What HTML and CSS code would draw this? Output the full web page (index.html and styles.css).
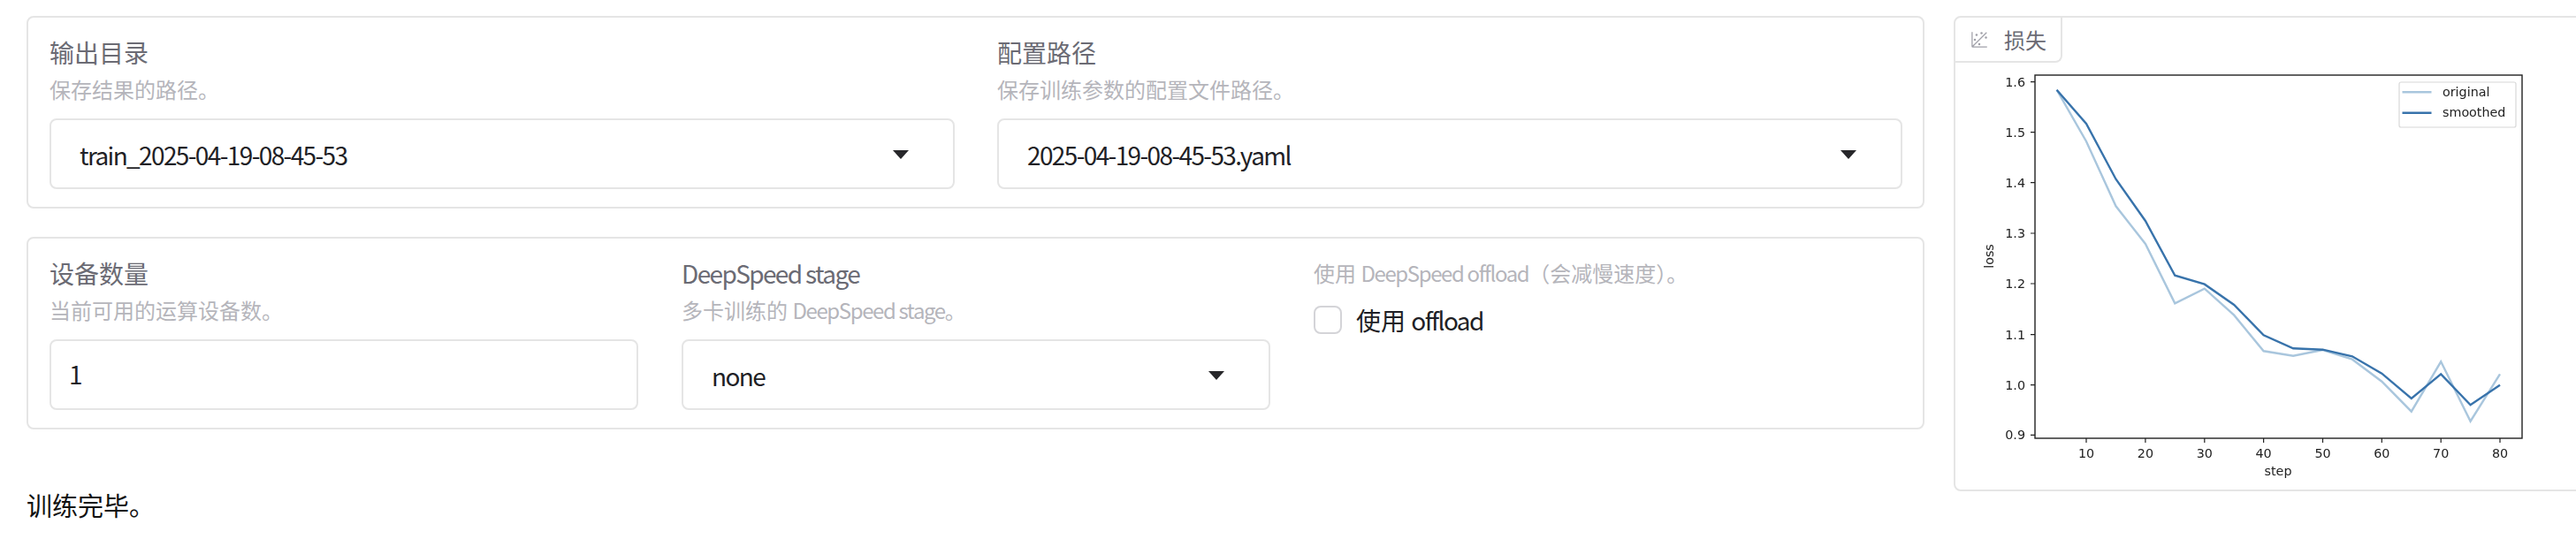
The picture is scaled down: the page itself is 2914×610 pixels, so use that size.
FILE: index.html
```html
<!DOCTYPE html>
<html lang="zh-CN">
<head>
    <meta charset="UTF-8">
    <title>训练</title>
    <link rel="stylesheet" href="styles.css">
</head>
<body>

    <div class="page">
        <div class="left-col">
            <div class="block two-col">
                <div class="field">
                    <div class="label">输出目录</div>
                    <div class="info">保存结果的路径。</div>
                    <div class="input select"><span class="en">train_2025-04-19-08-45-53</span><i class="caret"></i></div>
                </div>
                <div class="field">
                    <div class="label">配置路径</div>
                    <div class="info">保存训练参数的配置文件路径。</div>
                    <div class="input select"><span class="en">2025-04-19-08-45-53.yaml</span><i class="caret"></i></div>
                </div>
            </div>

            <div class="block three-col">
                <div class="field">
                    <div class="label">设备数量</div>
                    <div class="info">当前可用的运算设备数。</div>
                    <div class="input number"><span>1</span></div>
                </div>
                <div class="field">
                    <div class="label en">DeepSpeed stage</div>
                    <div class="info">多卡训练的 <span class="en">DeepSpeed stage</span>。</div>
                    <div class="input select"><span class="en">none</span><i class="caret"></i></div>
                </div>
                <div class="field">
                    <div class="info check-info">使用 <span class="en">DeepSpeed offload</span>（会减慢速度）。</div>
                    <div class="check-row">
                        <span class="checkbox"></span>
                        <span class="check-text">使用 <span class="en">offload</span></span>
                    </div>
                </div>
            </div>

            <div class="status">训练完毕。</div>
        </div>

        <div class="plot-card">
            <div class="plot-label">
                <svg class="plot-icon" viewBox="0 0 32 32" fill="currentColor">
                    <circle cx="20" cy="4" r="2"/>
                    <circle cx="8" cy="16" r="2"/>
                    <circle cx="28" cy="12" r="2"/>
                    <circle cx="11" cy="7" r="2"/>
                    <circle cx="16" cy="24" r="2"/>
                    <path d="M30 3.413L28.586 2L4 26.585V2H2v26a2 2 0 0 0 2 2h26v-2H5.413Z"/>
                </svg>
                <span>损失</span>
            </div>

            <!-- viewBox uses the page coordinates of the chart -->
            <svg class="chart" viewBox="2212 72 700 482" width="700" height="482">
                <rect x="2302" y="85" width="551" height="411" fill="#fff" stroke="#222" stroke-width="1.4"/>

                <g stroke="#222" stroke-width="1.2">
                    <path d="M2297 92.7h5M2297 149.7h5M2297 206.7h5M2297 264h5M2297 321h5M2297 378.7h5M2297 435.7h5M2297 492.3h5"/>
                    <path d="M2360 496v5M2426.9 496v5M2493.8 496v5M2560.6 496v5M2627.5 496v5M2694.3 496v5M2761.2 496v5M2828 496v5"/>
                </g>

                <polyline class="line-orig" points="2326.6,101.7 2360,160 2393.5,233.3 2426.9,276 2460.3,343.3 2493.8,326.7 2527.2,356.7 2560.6,397.3 2594.1,402.7 2627.5,396 2660.9,406.7 2694.3,431.7 2727.8,465.7 2761.2,409.3 2794.6,476.7 2828,423.3"/>
                <polyline class="line-smooth" points="2326.6,101.7 2360,140 2393.5,202.7 2426.9,250 2460.3,311.7 2493.8,321.7 2527.2,345 2560.6,379.3 2594.1,394.3 2627.5,395.7 2660.9,403.3 2694.3,422.7 2727.8,451 2761.2,423.3 2794.6,458.3 2828,435.7"/>

                <g class="tick-y">
                    <text x="2291" y="97.7">1.6</text>
                    <text x="2291" y="154.7">1.5</text>
                    <text x="2291" y="211.7">1.4</text>
                    <text x="2291" y="269">1.3</text>
                    <text x="2291" y="326">1.2</text>
                    <text x="2291" y="383.7">1.1</text>
                    <text x="2291" y="440.7">1.0</text>
                    <text x="2291" y="497.3">0.9</text>
                </g>
                <g class="tick-x">
                    <text x="2360" y="518">10</text>
                    <text x="2426.9" y="518">20</text>
                    <text x="2493.8" y="518">30</text>
                    <text x="2560.6" y="518">40</text>
                    <text x="2627.5" y="518">50</text>
                    <text x="2694.3" y="518">60</text>
                    <text x="2761.2" y="518">70</text>
                    <text x="2828" y="518">80</text>
                </g>
                <text class="axis-title" x="2577" y="538">step</text>
                <text class="axis-title" transform="translate(2255 290) rotate(-90)">loss</text>

                <rect x="2714" y="93" width="132" height="51" rx="2" fill="#fff" stroke="#d8d8d8" stroke-width="1.2"/>
                <path class="line-orig" d="M2717.5 104.3h33"/>
                <path class="line-smooth" d="M2717.5 127.7h33"/>
                <text class="legend-text" x="2763" y="109">original</text>
                <text class="legend-text" x="2763" y="132">smoothed</text>
            </svg>
        </div>
    </div>

</body>
</html>
```
FILE: styles.css
```css
html, body {
    margin: 0;
    padding: 0;
    background: #fff;
}

body {
    font-family: "Noto Sans CJK SC", "Noto Sans", sans-serif;
    width: 2914px;
    height: 610px;
    overflow: hidden;
}

.page {
    display: flex;
    align-items: flex-start;
    gap: 33px;
    padding: 18px 0 0 30px;
}

.left-col {
    width: 2147px;
    flex-shrink: 0;
    display: flex;
    flex-direction: column;
    gap: 32px;
}

.block {
    height: 218px;
    box-sizing: border-box;
    padding: 19px 23px 0 24px;
    border: 2px solid #e5e5e5;
    border-radius: 8px;
    display: grid;
}

.two-col {
    grid-template-columns: 1fr 1fr;
    gap: 48px;
}

.three-col {
    grid-template-columns: 1fr 1fr 1fr;
    gap: 49px;
}

.field {
    display: flex;
    flex-direction: column;
}

/* latin text runs narrower than the CJK font's own latin glyphs */
.en {
    letter-spacing: -0.058em;
}

.label {
    font-size: 28px;
    line-height: 40px;
    color: #6b6b74;
}

.info {
    font-size: 24px;
    line-height: 36px;
    margin-top: 4px;
    color: #b5b5bb;
}

.input {
    height: 80px;
    box-sizing: border-box;
    margin-top: 15px;
    border: 2px solid #e5e5e5;
    border-radius: 8px;
    display: flex;
    align-items: center;
    justify-content: space-between;
    font-size: 28px;
    color: #1f1f26;
}

.select {
    padding: 2px 50px 0 32px;
}

.number {
    padding: 0 0 2px 20px;
}

.caret {
    width: 0;
    height: 0;
    border-left: 9px solid transparent;
    border-right: 9px solid transparent;
    border-top: 10px solid #27272a;
}

.check-info {
    margin-top: 0;
    line-height: 40px;
}

.check-row {
    display: flex;
    align-items: center;
    gap: 16px;
    margin-top: 13px;
}

.checkbox {
    width: 32px;
    height: 32px;
    box-sizing: border-box;
    border: 2px solid #d4d4d8;
    border-radius: 8px;
}

.check-text {
    font-size: 28px;
    line-height: 40px;
    color: #1f1f26;
}

.status {
    font-size: 29px;
    line-height: 40px;
    color: #111;
    margin-top: 33px;
}

.plot-card {
    position: relative;
    width: 720px;
    height: 538px;
    flex-shrink: 0;
    box-sizing: border-box;
    padding: 52px 0 0 0;
    border: 2px solid #e5e5e5;
    border-radius: 8px;
}

.plot-label {
    position: absolute;
    top: 0;
    left: 0;
    height: 51px;
    box-sizing: border-box;
    padding: 0 16px 0 17px;
    display: flex;
    align-items: center;
    gap: 18px;
    font-size: 24px;
    color: #6b6b74;
    border-right: 2px solid #e5e5e5;
    border-bottom: 2px solid #e5e5e5;
    border-radius: 0 0 8px 0;
}

.plot-icon {
    width: 20px;
    height: 20px;
    color: #a0a0a8;
}

.chart {
    display: block;
    filter: blur(0.5px);
}

.chart text {
    font-family: "DejaVu Sans", sans-serif;
    font-size: 14.3px;
    fill: #222;
}

.chart .tick-y text {
    text-anchor: end;
}

.chart .tick-x text,
.chart .axis-title {
    text-anchor: middle;
}

.line-orig,
.line-smooth {
    fill: none;
    stroke-width: 2.4;
}

.line-orig {
    stroke: #a9c6dd;
}

.line-smooth {
    stroke: #3873ab;
}
```
